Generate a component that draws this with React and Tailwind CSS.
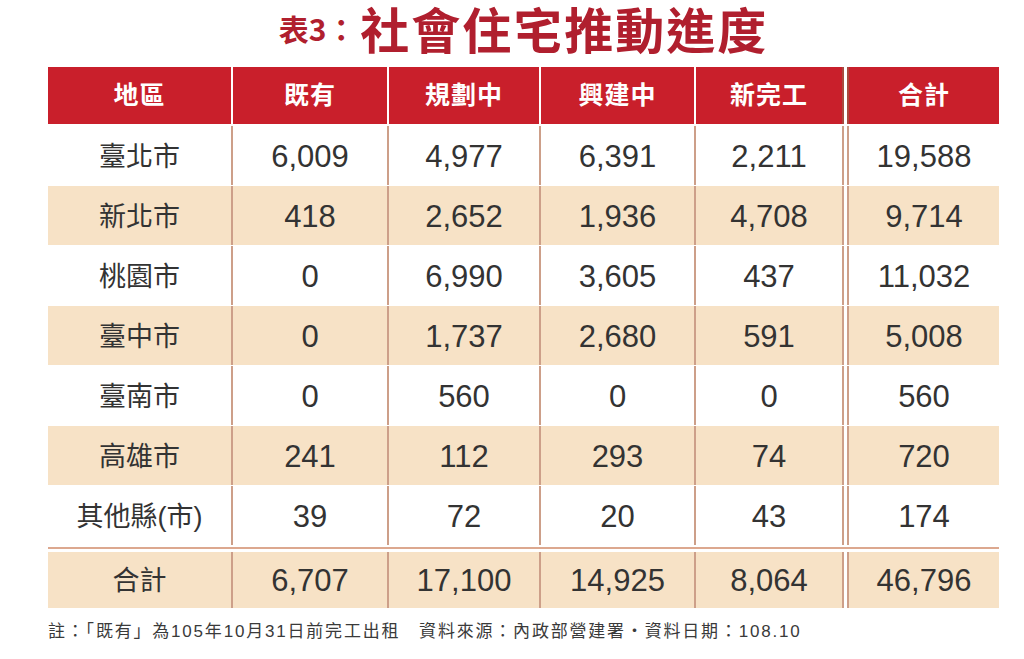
import React from 'react';

const cols = [
  { w: 'w-[183px]', border: '' },
  { w: 'w-[156px]', border: 'border-l-2' },
  { w: 'w-[152px]', border: 'border-l-2' },
  { w: 'w-[155px]', border: 'border-l-2' },
  { w: 'w-[148px]', border: 'border-l-2' },
  { w: 'w-[157px]', border: 'border-l-[7px] border-double bg-clip-padding' },
];

const headers = ['地區', '既有', '規劃中', '興建中', '新完工', '合計'];

const rows = [
  ['臺北市', '6,009', '4,977', '6,391', '2,211', '19,588'],
  ['新北市', '418', '2,652', '1,936', '4,708', '9,714'],
  ['桃園市', '0', '6,990', '3,605', '437', '11,032'],
  ['臺中市', '0', '1,737', '2,680', '591', '5,008'],
  ['臺南市', '0', '560', '0', '0', '560'],
  ['高雄市', '241', '112', '293', '74', '720'],
  ['其他縣(市)', '39', '72', '20', '43', '174'],
];

const total = ['合計', '6,707', '17,100', '14,925', '8,064', '46,796'];

const font = { fontFamily: '"Liberation Sans", "Noto Sans CJK TC", sans-serif' };

// one body row; shaded rows get the beige fill
const Row = ({ cells, shaded, height = 'h-[59px]' }) => (
  <div className={`flex ${height}`}>
    {cells.map((c, i) => (
      <div
        key={i}
        className={`${cols[i].w} ${cols[i].border} border-[#cd9f89] flex items-center justify-center pt-[3px] text-[#333333] ${
          shaded ? 'bg-[#f7e2c6]' : 'bg-white'
        } ${i === 0 ? 'text-[27px]' : 'text-[31px]'}`}
      >
        {c}
      </div>
    ))}
  </div>
);

export default function App() {
  return (
    <div className="min-h-screen bg-white" style={font}>
      <div className="ml-[48px] w-[951px]">
        {/* Title */}
        <div className="flex items-center justify-center h-[56px] text-[#b01f2e] font-['Noto_Sans_CJK_TC',serif]">
          <span className="text-[30px] font-bold leading-[56px] mr-1">表3：</span>
          <span className="text-[49px] font-bold leading-[56px] tracking-[2px]">社會住宅推動進度</span>
        </div>

        {/* Header */}
        <div className="flex h-[57px] mt-[11px]">
          {headers.map((h, i) => (
            <div
              key={h}
              className={`${cols[i].w} ${cols[i].border} ${
                i === 5 ? 'border-[#a8493f]' : 'border-white'
              } bg-[#c91f2b] flex items-center justify-center text-white text-[25px] font-bold tracking-[1px]`}
            >
              {h}
            </div>
          ))}
        </div>

        {/* Body */}
        <div className="flex flex-col gap-px mt-[2px]">
          {rows.map((r, i) => (
            <Row key={r[0]} cells={r} shaded={i % 2 === 1} />
          ))}
        </div>

        <div className="h-[2px] mt-[2px] bg-[#dca88f]" />

        <div className="mt-[3px]">
          <Row cells={total} shaded height="h-[56px]" />
        </div>

        {/* Note */}
        <p className="mt-[13px] text-[17px] leading-[22px] text-[#3a3a3a] tracking-[1.8px] whitespace-nowrap">
          註：「既有」為105年10月31日前完工出租　資料來源：內政部營建署・資料日期：108.10
        </p>
      </div>
    </div>
  );
}
